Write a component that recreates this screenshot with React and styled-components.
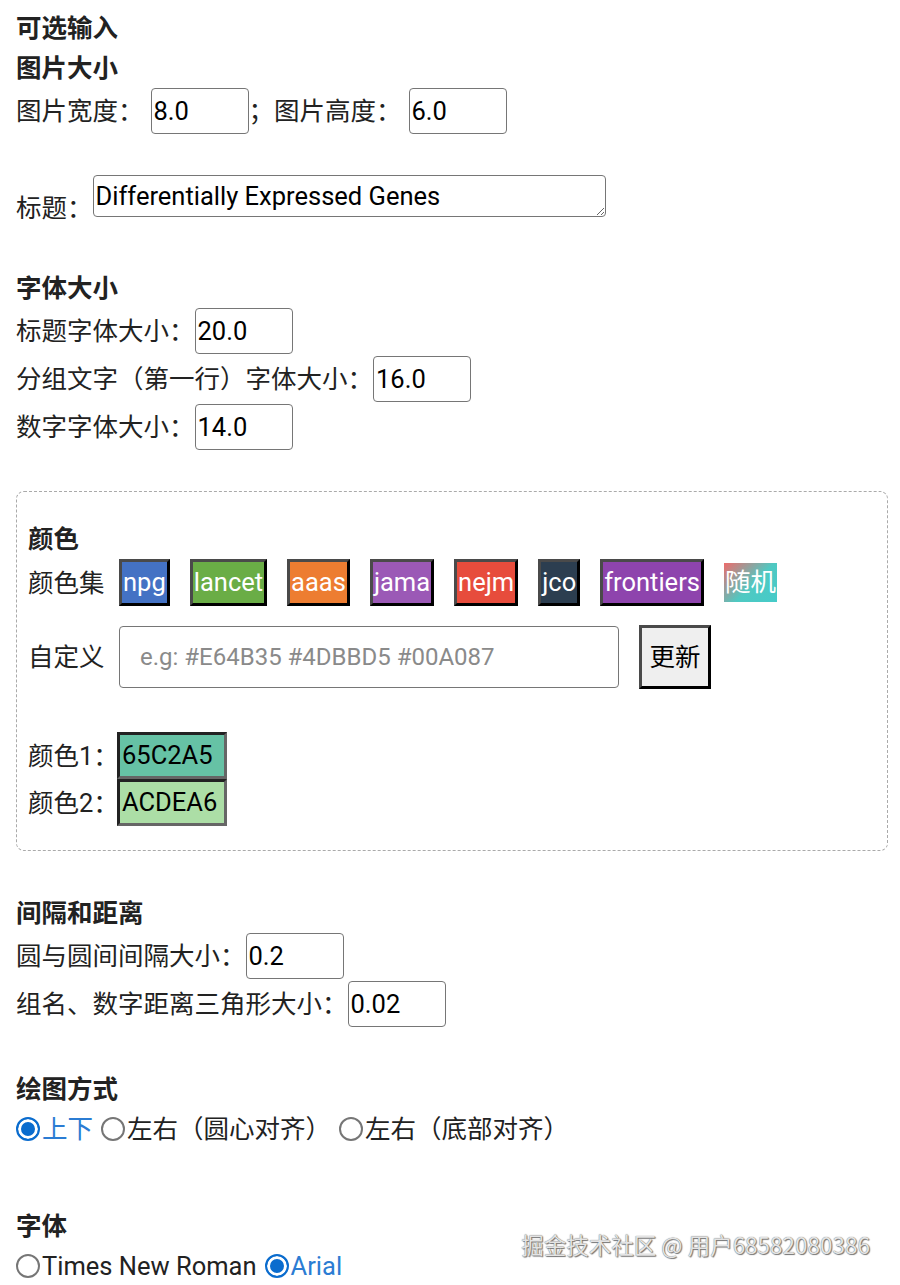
import React, { useState } from 'react';
import styled, { createGlobalStyle } from 'styled-components';

const GlobalStyle = createGlobalStyle`
    body {
        margin: 0;
        background: #fff;
        color: #222;
        font-family: Roboto, "Noto Sans CJK SC", sans-serif;
        font-size: 25.5px;
    }
    * { box-sizing: border-box; }
`;

const Page = styled.div`
    position: relative;
    width: 900px;
    min-height: 1285px;
    padding: 8px 12px 0 16px;
`;

const Heading = styled.div`
    font-weight: 700;
    line-height: 40px;
    margin-top: ${p => p.$top || 0}px;
`;

const Row = styled.div`
    display: flex;
    align-items: ${p => p.$align || 'center'};
    gap: ${p => p.$gap || 0}px;
    margin-top: ${p => p.$top || 0}px;
    line-height: 36px;
    white-space: nowrap;
`;

const Label = styled.span`
    flex: none;
    width: ${p => (p.$width ? `${p.$width}px` : 'auto')};
    margin-right: ${p => p.$space || 0}px;
`;

const BottomLabel = styled(Label)`
    margin-bottom: -9px;
`;

const NumInput = styled.input`
    width: 98px;
    height: 46px;
    padding: 0 2px;
    border: 1px solid #767676;
    border-radius: 4px;
    font: inherit;
    color: #000;
    background: #fff;
`;

const TitleArea = styled.textarea`
    width: 513px;
    height: 42px;
    padding: 3px 2px 1px;
    border: 1px solid #767676;
    border-radius: 4px;
    font: inherit;
    line-height: 34px;
    color: #000;
    overflow: hidden;
`;

const ColorPanel = styled.div`
    margin-top: 41px;
    padding: 27px 11px 24px;
    border: 1px dashed #aaa;
    border-radius: 8px;
`;

const PaletteList = styled.div`
    display: flex;
    gap: 20px;
`;

const PaletteButton = styled.button`
    height: 47px;
    padding: 0 1px;
    border: 3px solid;
    border-color: #4a4a4a #000 #000 #4a4a4a;
    background: ${p => p.$bg};
    color: #fff;
    font: inherit;
    line-height: 41px;
    cursor: pointer;
`;

const RandomButton = styled.button`
    height: 39px;
    margin-top: 4px;
    padding: 0 1px;
    border: none;
    background: linear-gradient(135deg, #ee6b6b 0%, #4fc9c2 55%, #45cbc9 100%);
    color: #fff;
    font: inherit;
    line-height: 39px;
    cursor: pointer;
`;

const CustomInput = styled.input`
    width: 500px;
    height: 62px;
    padding: 0 20px;
    border: 1px solid #767676;
    border-radius: 4px;
    font: inherit;
    font-size: 24px;
    color: #000;
    &::placeholder { color: #8a8a8a; }
`;

const UpdateButton = styled.button`
    width: 72px;
    height: 64px;
    padding: 0;
    border: 3px solid;
    border-color: #4a4a4a #000 #000 #4a4a4a;
    background: #efefef;
    color: #000;
    font: inherit;
    cursor: pointer;
`;

const Swatches = styled.div`
    display: flex;
    flex-direction: column;
    margin-top: 43px;
`;

const Swatch = styled.div`
    width: 110px;
    height: 47px;
    padding-left: 2px;
    border: 3px solid;
    border-color: #222 #666 #666 #222;
    background: ${p => p.$bg};
    color: #000;
    line-height: 41px;
`;

const RadioRow = styled.div`
    display: flex;
    align-items: center;
    gap: 8px;
    line-height: 40px;
    white-space: nowrap;
`;

const RadioLabel = styled.label`
    display: inline-flex;
    align-items: center;
    gap: 2px;
    color: ${p => (p.$active ? '#2b7cd3' : '#222')};
    cursor: pointer;
`;

const RadioDot = styled.input`
    appearance: none;
    width: 24px;
    height: 24px;
    margin: 0;
    border: 2px solid #767676;
    border-radius: 50%;
    background: #fff;
    &:checked {
        border-color: #0a6cce;
        background: #0a6cce;
        box-shadow: inset 0 0 0 3px #fff;
    }
`;

const Watermark = styled.div`
    position: absolute;
    right: 30px;
    top: 1228px;
    font-size: 22.5px;
    color: #e4e4e4;
    text-shadow: 0 0 1px #555, 1px 1px 1px #777;
    font-family: "Noto Sans CJK SC", sans-serif;
    pointer-events: none;
`;

const palettes = [
    { name: 'npg', bg: '#4472c4' },
    { name: 'lancet', bg: '#6aad46' },
    { name: 'aaas', bg: '#ed7d31' },
    { name: 'jama', bg: '#9b59b6' },
    { name: 'nejm', bg: '#e74c3c' },
    { name: 'jco', bg: '#2c3e50' },
    { name: 'frontiers', bg: '#8e44ad' },
];

const RadioGroup = ({ name, options, initial }) => {
    const [value, setValue] = useState(initial);
    return (
        <RadioRow>
            {options.map(opt => (
                <RadioLabel key={opt} $active={value === opt}>
                    <RadioDot type="radio" name={name} checked={value === opt} onChange={() => setValue(opt)} />
                    {opt}
                </RadioLabel>
            ))}
        </RadioRow>
    );
};

const FieldRow = ({ label, value, top }) => (
    <Row $top={top}>
        <Label>{label}</Label>
        <NumInput defaultValue={value} />
    </Row>
);

const App = () => {
    return (
        <Page>
            <GlobalStyle />
            <Heading>可选输入</Heading>
            <Heading>图片大小</Heading>
            <Row>
                <Label $space={7}>图片宽度：</Label>
                <NumInput defaultValue="8.0" />
                <Label $space={7}>；图片高度：</Label>
                <NumInput defaultValue="6.0" />
            </Row>
            <Row $align="flex-end" $top={41}>
                <BottomLabel>标题：</BottomLabel>
                <TitleArea defaultValue="Differentially Expressed Genes" />
            </Row>

            <Heading $top={51}>字体大小</Heading>
            <FieldRow label="标题字体大小：" value="20.0" />
            <FieldRow label="分组文字（第一行）字体大小：" value="16.0" top={2} />
            <FieldRow label="数字字体大小：" value="14.0" top={2} />

            <ColorPanel>
                <Heading>颜色</Heading>
                <Row>
                    <Label $width={91}>颜色集</Label>
                    <PaletteList>
                        {palettes.map(p => (
                            <PaletteButton key={p.name} $bg={p.bg}>{p.name}</PaletteButton>
                        ))}
                        <RandomButton>随机</RandomButton>
                    </PaletteList>
                </Row>
                <Row $top={19} $gap={20}>
                    <Label $width={71}>自定义</Label>
                    <CustomInput placeholder="e.g: #E64B35 #4DBBD5 #00A087" />
                    <UpdateButton>更新</UpdateButton>
                </Row>
                <Swatches>
                    <Row>
                        <Label $width={89}>颜色1：</Label>
                        <Swatch $bg="#66c2a5">65C2A5</Swatch>
                    </Row>
                    <Row>
                        <Label $width={89}>颜色2：</Label>
                        <Swatch $bg="#acdea6">ACDEA6</Swatch>
                    </Row>
                </Swatches>
            </ColorPanel>

            <Heading $top={42}>间隔和距离</Heading>
            <FieldRow label="圆与圆间间隔大小：" value="0.2" />
            <FieldRow label="组名、数字距离三角形大小：" value="0.02" top={2} />

            <Heading $top={42}>绘图方式</Heading>
            <RadioGroup name="layout" options={['上下', '左右（圆心对齐）', '左右（底部对齐）']} initial="上下" />

            <Heading $top={57}>字体</Heading>
            <RadioGroup name="font" options={['Times New Roman', 'Arial']} initial="Arial" />

            <Watermark>掘金技术社区 @ 用户68582080386</Watermark>
        </Page>
    );
};

export default App;
